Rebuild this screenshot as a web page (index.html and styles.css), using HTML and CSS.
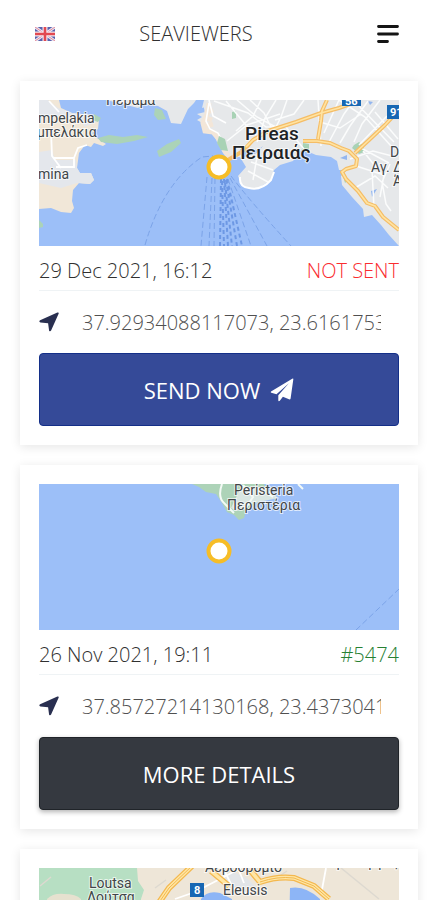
FILE: index.html
```html
<!DOCTYPE html>
<html lang="en">
<head>
<meta charset="utf-8">
<meta name="viewport" content="width=device-width, initial-scale=1">
<title>SEAVIEWERS</title>
<link rel="stylesheet" href="styles.css">
</head>
<body>
<header class="topbar">
  <button class="icon-button" type="button" aria-label="Language">
    <svg class="flag" viewBox="0 0 20 14" aria-hidden="true">
      <rect width="20" height="14" rx="1" fill="#5961ad"/>
      <path d="M0 0L20 14M20 0L0 14" stroke="#e9e6f3" stroke-width="3"/>
      <path d="M0 0L20 14M20 0L0 14" stroke="#e58b9b" stroke-width="1"/>
      <path d="M10 0V14M0 7H20" stroke="#f5e8ee" stroke-width="5"/>
      <path d="M10 0V14M0 7H20" stroke="#e24850" stroke-width="2.6"/>
    </svg>
  </button>
  <h1 class="brand">SEAVIEWERS</h1>
  <button class="icon-button" type="button" aria-label="Menu">
    <svg class="menu" viewBox="0 0 22 20" aria-hidden="true">
      <path d="M1.5 2.5H20.5M1.5 10H20.5M1.5 17.5H10.5" stroke="#151515" stroke-width="2.8" stroke-linecap="round"/>
    </svg>
  </button>
</header>

<main class="reports">
  <article class="card">
    <svg class="map" viewBox="0 0 360 146" preserveAspectRatio="xMidYMid slice" role="img" aria-label="Map of Pireas">
      <rect width="360" height="146" fill="#9cbff8"/>
      <path d="M0 0H20L22 8L33 13L53 15L60 20L59 29L53 33L58 38L67 44L64 46L55 43L52 47L46 45L40 53L38 68L41 73H52L55 80L51 84L40 83L34 90L33 101L35 108L32 113L22 112L12 108L0 109Z" fill="#f1e7d8"/>
      <path d="M0 0H9L19 8L33 13L53 15L57 22L45 27L43 17H0ZM0 52L13 50L16 60H37L38 68L41 73H52L55 80L51 84L38 83L22 88L0 83Z" fill="#e4e7ec"/>
      <path d="M10 1L20 12M12 31L13 56L22 68M15 58H35V67H17M35 58L39 48L48 45" fill="none" stroke="#fff" stroke-width="1.8"/>
      <path d="M55 14L62 18L59 22L53 20ZM59 38L70 35L84 37L98 35L109 37L95 41L78 44L62 42ZM118 51L128 44L140 39L142 43L132 52L120 57ZM116 8L123 10L127 19L119 20L115 15ZM0 120L4 124V127L0 128Z" fill="#abd3b8"/>
      <path d="M67 0H157L155 3L149 9L142 24L132 23L128 11L119 6L105 4L99 8L80 3ZM165 0H173L170 5L163 8ZM168 0H360V146L350 135L342 125L333 115L325 117L324 109L313 97L303 85L302 76L308 70L300 70L298 61L292 57L277 55L263 49L254 61L241 65L235 70L232 80L218 89L204 87L199 76L207 67L201 57L190 58L184 53L178 42L174 33L164 32L165 24L158 20L163 17L158 14L166 12L164 5Z" fill="#e6e8ea"/>
      <path d="M170 3L169 12L164 23L166 31L174 32L180 39L187 53L191 58M166 13L174 10M164 27L174 24M167 18L173 20" fill="none" stroke="#f3e6d8" stroke-width="5"/>
      <path d="M170 3L167 21L171 29L179 33L187 48M170 0L174 16L187 23" fill="none" stroke="#fff" stroke-width="1.6"/>
      <path d="M180 36L186 39L189 51L182 50L178 43ZM193 12L197 11V18L193 19ZM264 43L270 44V52H263ZM315 45L320 42L325 46L325 52L320 54L313 48ZM303 72L309 80L306 83Z" fill="#a8d2b5"/>
      <path d="M201 49L219 50L224 46L218 53L209 55L203 59ZM301 58L308 55V60ZM332 91L338 89L333 97ZM329 1L334 2L331 5Z" fill="#93b6ef"/>
      <path d="M175 1L209 13L227 27L246 26L265 49M187 1L206 24L219 37M188 41L208 25L241 14M198 0L218 17L244 31M211 0L225 13L232 27M222 0L214 16L197 31M237 0L226 18L218 42M248 0L242 17L233 35M265 0L255 14L236 20M279 0L282 46M286 5L280 25M285 33L300 0M290 42L305 14L315 0M281 22L301 28L322 14M300 0L326 17L352 46M314 0L355 42M329 1L311 26L301 43M341 0L323 24L315 42M336 12L359 39M348 16L320 45M322 48L350 63M311 59L334 51L357 57M314 65L345 75L341 97M316 88L336 76L349 88M333 70L335 108M351 64L343 82L347 104L352 111M324 51L341 72M212 62L234 70M209 71L229 82M218 57L214 80" fill="none" stroke="#fbfcfc" stroke-width="1.5"/>
      <path d="M288 0L283 11L282 21L279 39M189 60L204 51L214 40L229 31L257 22L282 13L300 8L311 4M264 41H278L291 43L302 48L310 51L318 59L317 66L307 69L303 72L307 79L319 91L328 103L336 106L344 117L360 130M316 53L330 40L346 25L360 10" fill="none" stroke="#f5bd66" stroke-width="4" stroke-linejoin="round"/>
      <path d="M288 0L283 11L282 21L279 39M207 47L214 40L229 31L257 22L282 13L300 8L311 4M264 41H278L291 43L302 48L310 51L318 59L317 66L307 69L303 72L307 79L319 91L328 103L336 106L344 117L360 130M316 53L330 40L346 25L360 10" fill="none" stroke="#ffe3a1" stroke-width="1.7"/>
      <path d="M201 77Q200 87 210 88Q222 91 232 80L235 72" fill="none" stroke="#fff" stroke-width="2"/>
      <path d="M106 145Q124 83 163 57L174 56M168 77L162 146M173 78L170 146M176 78L175 146M191 78L228 146M192 76Q211 101 252 146M189 79L212 146" class="ferry"/>
      <path d="M182 79L181 146M183 81L185 146M185 79L189 146M186 83L193 146M187 80L198 146M188 79L203 146" class="ferry busy"/>
      <g class="place">
        <text x="67" y="5">Πέραμα</text>
        <text x="-1" y="23">mpelakia</text>
        <text x="-2" y="37">μπελάκια</text>
        <text x="-1" y="79">mina</text>
        <text x="351" y="57">Dafni</text>
        <text x="332" y="72">Αγ. Δ</text>
        <text x="354" y="86">Άλιμος</text>
      </g>
      <g class="city"><text x="206" y="40">Pireas</text><text x="193" y="59">Πειραιάς</text></g>
      <path d="M303 -8H322V6H303ZM348 5H366V19H348Z" fill="#1767b3"/>
      <g class="road"><text x="306" y="5">56</text><text x="351" y="16">91</text></g>
      <circle cx="180" cy="67" r="10.5" fill="#fff" stroke="#f6bd27" stroke-width="4"/>
    </svg>
    <div class="summary"><time datetime="2021-12-29T16:12">29 Dec 2021, 16:12</time><span class="unsent">NOT SENT</span></div>
    <div class="position">
      <svg class="arrow" viewBox="0 0 20 20" aria-hidden="true"><path d="M18.4.5Q20.2 0 19.6 1.8L12.1 18.5Q11.2 20 10.1 18.7L9.1 11.3L1.5 10.6Q-.6 9.7 1.1 8.3Z" fill="#292f50"/></svg>
      <input type="text" readonly aria-label="Coordinates" value="37.92934088117073, 23.6161753">
    </div>
    <button class="action send" type="button">SEND NOW
      <svg class="plane" viewBox="0 0 24 24" aria-hidden="true"><path d="M1 13.6L22.2.8Q23.6.2 23.3 1.6L20.6 20.5Q20.3 21.8 19 21.3L12.9 18.8L9.8 22.8Q8.5 24 8.3 22.3V17.3L18.9 5.3L6.5 16.2L1.3 14.8Q.2 14.3 1 13.6Z" fill="#fff"/></svg>
    </button>
  </article>

  <article class="card">
    <svg class="map" viewBox="0 0 360 146" preserveAspectRatio="xMidYMid slice" role="img" aria-label="Map of Peristeria">
      <rect width="360" height="146" fill="#9cbff8"/>
      <path d="M153 0H225L230 10L220 17L207 27L205 34L200 36L195 31L188 28L183 19L177 10L167 8L160 3Z" fill="#add3b8"/>
      <path d="M202 3H226L239 14L215 19L198 27L192 24Z" fill="#d9e6e2"/>
      <path d="M183 0Q178 14 186 20L195 29M204 1L214 13L206 25M229 10L234 13M259 0L264 5" fill="none" stroke="#f4faf6" stroke-width="2"/>
      <path d="M317 146L360 105" class="ferry"/>
      <g class="place"><text x="195" y="11">Peristeria</text><text x="188" y="26">Περιστέρια</text></g>
      <circle cx="180" cy="67" r="10.5" fill="#fff" stroke="#f6bd27" stroke-width="4"/>
    </svg>
    <div class="summary"><time datetime="2021-11-26T19:11">26 Nov 2021, 19:11</time><span class="sent">#5474</span></div>
    <div class="position">
      <svg class="arrow" viewBox="0 0 20 20" aria-hidden="true"><path d="M18.4.5Q20.2 0 19.6 1.8L12.1 18.5Q11.2 20 10.1 18.7L9.1 11.3L1.5 10.6Q-.6 9.7 1.1 8.3Z" fill="#292f50"/></svg>
      <input type="text" readonly aria-label="Coordinates" value="37.85727214130168, 23.4373041">
    </div>
    <button class="action details" type="button">MORE DETAILS</button>
  </article>

  <article class="card">
    <svg class="map" viewBox="0 0 360 146" preserveAspectRatio="xMidYMid slice" role="img" aria-label="Map of Eleusis">
      <rect width="360" height="146" fill="#eee6d8"/>
      <path d="M0 0H98L99 13L105 22L102 31V146H0Z" fill="#b7dfc3"/>
      <path d="M8 31Q14 25 25 26Q37 26 42 31V60H10Z" fill="#e6e1cf"/>
      <path d="M184 9L195 4L209 11L216 18L204 20L188 18Z" fill="#e2e5e8"/>
      <path d="M162 31Q168 22 181 25L193 31V60H160ZM251 20Q266 17 281 31V65H250Z" fill="#8db5f6"/>
      <path d="M136 31L156 24L181 11L202 0M184 0L194 20L211 27M287 0L282 27M199 0L205 15" fill="none" stroke="#fff" stroke-width="1.8"/>
      <path d="M302 0L340 31M1 18L12 9M116 20L127 12M233 13L248 3" stroke="#ddd9d0" stroke-width="1.5"/>
      <path d="M119 36L130 20L154 -3M172 3L190 18M211 2L221 14Q238 8 255 10L275 18L290 31" fill="none" stroke="#f4b84e" stroke-width="6"/>
      <path d="M119 36L130 20L154 -3M172 3L190 18M211 2L221 14Q238 8 255 10L275 18L290 31" fill="none" stroke="#ffe6a5" stroke-width="3.5"/>
      <path d="M119 36L130 20L154 -3M221 14Q238 8 255 10L275 18L290 31" fill="none" stroke="#f1b74e" stroke-width="1"/>
      <g class="place"><text x="166" y="4">Αεροδρόμιο</text><text x="272" y="-1">Ασπρόπυργος</text><text x="50" y="20">Loutsa</text><text x="48" y="34">Λούτσα</text><text x="184" y="27">Eleusis</text></g>
      <rect x="151" y="15" width="14" height="14" fill="#1767b3"/>
      <g class="road"><text x="155" y="26">8</text></g>
    </svg>
  </article>
</main>
</body>
</html>
```
FILE: styles.css
```css
* {
  box-sizing: border-box;
}

body {
  display: flex;
  flex-direction: column;
  height: 100vh;
  margin: 0;
  overflow: hidden;
  background: #fff;
  color: #303030;
  font-family: "Open Sans", "Noto Sans", sans-serif;
  font-weight: 300;
}

.topbar {
  display: grid;
  grid-template-columns: 22px 1fr 22px;
  align-items: center;
  flex: none;
  height: 67px;
  padding: 0 39px 0 35px;
}

.icon-button {
  display: flex;
  padding: 0;
  border: 0;
  background: none;
}

.flag {
  width: 20px;
  height: 14px;
}

.menu {
  width: 22px;
  height: 20px;
}

.brand {
  justify-self: center;
  margin: 0 42px 0 0;
  font-size: 20px;
  font-weight: 300;
  line-height: 28px;
}

.reports {
  display: flex;
  flex: 1;
  flex-direction: column;
  gap: 20px;
  min-height: 0;
  padding: 14px 20px 0;
  overflow: hidden;
}

.card {
  flex: none;
  padding: 19px;
  background: #fff;
  box-shadow: 0 2px 10px rgba(0, 0, 0, 0.1);
}

.map {
  display: block;
  width: 100%;
  height: 146px;
}

.ferry {
  fill: none;
  stroke: #7ba3e8;
  stroke-width: 1;
  stroke-dasharray: 6 3;
}

.busy {
  stroke: #6d98e4;
  stroke-width: 2;
  stroke-dasharray: 4 3;
}

.place,
.city,
.road {
  font-family: Roboto, sans-serif;
}

.place {
  fill: #414548;
  font-size: 14px;
  font-weight: 400;
  stroke: #ffffffb0;
  stroke-width: 2;
  paint-order: stroke;
}

.city {
  fill: #202326;
  font-size: 19px;
  font-weight: 500;
  stroke: #ffffffb0;
  stroke-width: 2;
  paint-order: stroke;
}

.road {
  fill: #fff;
  font-size: 11px;
  font-weight: 700;
}

.summary {
  display: flex;
  align-items: center;
  justify-content: space-between;
  height: 45px;
  padding-top: 4px;
  border-bottom: 1px solid #eff3f5;
  font-size: 20px;
}

.unsent {
  color: #fa2c30;
}

.sent {
  color: #278032;
}

.position {
  display: flex;
  align-items: center;
  gap: 23px;
  height: 62px;
  padding-right: 18px;
}

.arrow {
  flex: none;
  width: 20px;
  height: 20px;
}

.position input {
  flex: 1;
  min-width: 0;
  padding: 0;
  border: 0;
  background: none;
  color: #505050;
  font: inherit;
  font-size: 20px;
}

.action {
  display: flex;
  align-items: center;
  justify-content: center;
  gap: 10px;
  width: 100%;
  height: 73px;
  border: 1px solid;
  border-radius: 4px;
  color: #fff;
  font: inherit;
  font-size: 22px;
  font-weight: 400;
}

.send {
  border-color: #142f88;
  background: #354a98;
}

.details {
  border-color: #202429;
  background: #353940;
  box-shadow: 0 2px 5px rgba(0, 0, 0, 0.3);
}

.plane {
  width: 24px;
  height: 24px;
}
```
